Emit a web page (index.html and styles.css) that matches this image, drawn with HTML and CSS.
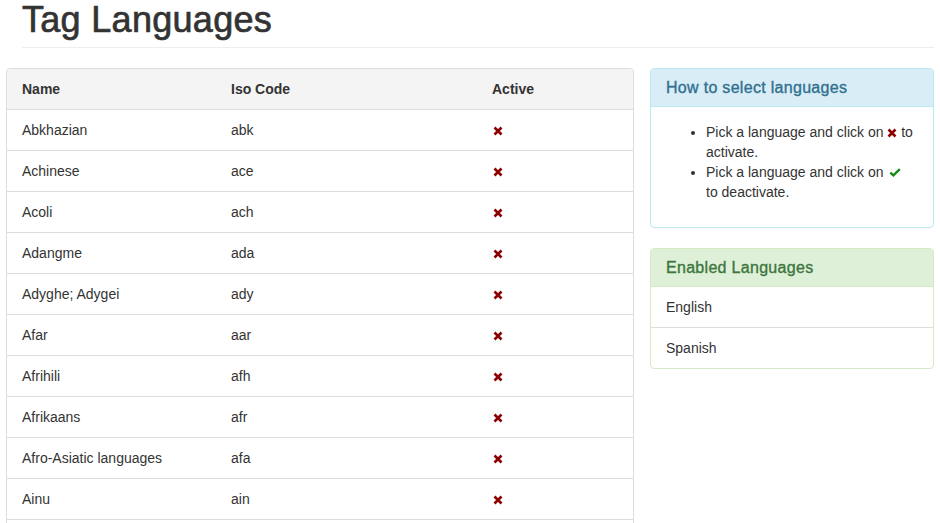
FILE: index.html
```html
<!DOCTYPE html>
<html>
<head>
<meta charset="utf-8">
<title>Tag Languages</title>
<link rel="stylesheet" href="styles.css">
</head>
<body>
<div class="page">
  <div class="page-header">
    <h1>Tag Languages</h1>
  </div>
  <div class="layout">
    <div class="panel panel-default table-panel">
      <table class="table">
        <colgroup>
          <col class="c-name">
          <col class="c-iso">
          <col class="c-active">
        </colgroup>
        <thead>
          <tr><th>Name</th><th>Iso Code</th><th>Active</th></tr>
        </thead>
        <tbody>
          <tr><td>Abkhazian</td><td>abk</td><td><svg class="ic-x" viewBox="0 0 10 10"><path d="M1.5 1.5L8.5 8.5M8.5 1.5L1.5 8.5"/></svg></td></tr>
          <tr><td>Achinese</td><td>ace</td><td><svg class="ic-x" viewBox="0 0 10 10"><path d="M1.5 1.5L8.5 8.5M8.5 1.5L1.5 8.5"/></svg></td></tr>
          <tr><td>Acoli</td><td>ach</td><td><svg class="ic-x" viewBox="0 0 10 10"><path d="M1.5 1.5L8.5 8.5M8.5 1.5L1.5 8.5"/></svg></td></tr>
          <tr><td>Adangme</td><td>ada</td><td><svg class="ic-x" viewBox="0 0 10 10"><path d="M1.5 1.5L8.5 8.5M8.5 1.5L1.5 8.5"/></svg></td></tr>
          <tr><td>Adyghe; Adygei</td><td>ady</td><td><svg class="ic-x" viewBox="0 0 10 10"><path d="M1.5 1.5L8.5 8.5M8.5 1.5L1.5 8.5"/></svg></td></tr>
          <tr><td>Afar</td><td>aar</td><td><svg class="ic-x" viewBox="0 0 10 10"><path d="M1.5 1.5L8.5 8.5M8.5 1.5L1.5 8.5"/></svg></td></tr>
          <tr><td>Afrihili</td><td>afh</td><td><svg class="ic-x" viewBox="0 0 10 10"><path d="M1.5 1.5L8.5 8.5M8.5 1.5L1.5 8.5"/></svg></td></tr>
          <tr><td>Afrikaans</td><td>afr</td><td><svg class="ic-x" viewBox="0 0 10 10"><path d="M1.5 1.5L8.5 8.5M8.5 1.5L1.5 8.5"/></svg></td></tr>
          <tr><td>Afro-Asiatic languages</td><td>afa</td><td><svg class="ic-x" viewBox="0 0 10 10"><path d="M1.5 1.5L8.5 8.5M8.5 1.5L1.5 8.5"/></svg></td></tr>
          <tr><td>Ainu</td><td>ain</td><td><svg class="ic-x" viewBox="0 0 10 10"><path d="M1.5 1.5L8.5 8.5M8.5 1.5L1.5 8.5"/></svg></td></tr>
          <tr><td>Akan</td><td>aka</td><td><svg class="ic-x" viewBox="0 0 10 10"><path d="M1.5 1.5L8.5 8.5M8.5 1.5L1.5 8.5"/></svg></td></tr>
          <tr><td>Akkadian</td><td>akk</td><td><svg class="ic-x" viewBox="0 0 10 10"><path d="M1.5 1.5L8.5 8.5M8.5 1.5L1.5 8.5"/></svg></td></tr>
        </tbody>
      </table>
    </div>
    <div class="side">
      <div class="panel panel-info">
        <div class="panel-heading"><h3 class="panel-title">How to select languages</h3></div>
        <div class="panel-body">
          <ul class="help-list">
            <li>Pick a language and click on <svg class="ic-x" viewBox="0 0 10 10"><path d="M1.5 1.5L8.5 8.5M8.5 1.5L1.5 8.5"/></svg> to activate.</li>
            <li>Pick a language and click on <svg class="ic-ok" viewBox="0 0 12 9"><path d="M1.3 4.6L4.4 7.4L10.8 1.2"/></svg> <span class="nowrap">to deactivate.</span></li>
          </ul>
        </div>
      </div>
      <div class="panel panel-success">
        <div class="panel-heading"><h3 class="panel-title">Enabled Languages</h3></div>
        <ul class="list-group">
          <li class="list-group-item">English</li>
          <li class="list-group-item">Spanish</li>
        </ul>
      </div>
    </div>
  </div>
</div>
</body>
</html>
```
FILE: styles.css
```css
* { box-sizing: border-box; }
html, body { margin: 0; padding: 0; background: #fff; }
body {
  font-family: "Liberation Sans", Arial, sans-serif;
  font-size: 14px;
  line-height: 20px;
  color: #333;
}
.page { padding: 0 6px; }
.page-header {
  margin: 0 0 20px 16px;
  padding-bottom: 7px;
  border-bottom: 1px solid #eee;
}
.page-header h1 {
  margin: 0;
  font-size: 36px;
  line-height: 40px;
  font-weight: 500;
  color: #333;
  letter-spacing: 0.3px;
  -webkit-text-stroke: 0.7px #333;
}
.layout {
  display: grid;
  grid-template-columns: 628px 284px;
  column-gap: 16px;
  align-items: start;
}
.panel {
  border: 1px solid #ddd;
  border-radius: 4px;
  background: #fff;
  margin-bottom: 20px;
  overflow: hidden;
}
.table {
  width: 100%;
  border-collapse: collapse;
  table-layout: fixed;
}
.c-name { width: 209px; }
.c-iso { width: 261px; }
.table th, .table td {
  text-align: left;
  padding: 10px 15px;
  line-height: 20px;
  vertical-align: middle;
}
.table th { font-weight: bold; background: #f4f4f4; border-bottom: 1px solid #ddd; }
.table td { border-top: 1px solid #ddd; }
.table tbody tr:first-child td { border-top: 0; }
.ic-x {
  width: 10px;
  height: 10px;
  vertical-align: -1px;
  fill: none;
  stroke: #8b0000;
  stroke-width: 2.6;
}
.table .ic-x { margin-left: 1px; }
.ic-ok {
  width: 12px;
  height: 9px;
  vertical-align: 0;
  margin-left: 2px;
  fill: none;
  stroke: #1a8a1a;
  stroke-width: 2.4;
}
.nowrap { white-space: nowrap; }
.panel-heading {
  padding: 10px 15px;
  border-bottom: 1px solid transparent;
}
.panel-title {
  margin: 0;
  font-size: 16px;
  line-height: 17px;
  font-weight: 500;
  letter-spacing: 0.3px;
  -webkit-text-stroke: 0.35px currentColor;
}
.panel-info { border-color: #bce8f1; }
.panel-info .panel-heading { background: #d9edf7; border-color: #bce8f1; color: #31708f; }
.panel-success { border-color: #d6e9c6; }
.panel-success .panel-heading { background: #dff0d8; border-color: #d6e9c6; color: #3c763d; }
.panel-body { padding: 15px; }
.help-list { margin: 0 0 10px; padding-left: 40px; }
.list-group { list-style: none; margin: 0; padding: 0; }
.list-group-item {
  padding: 10px 15px;
  border-top: 1px solid #ddd;
}
.list-group-item:first-child { border-top: 0; }
```
